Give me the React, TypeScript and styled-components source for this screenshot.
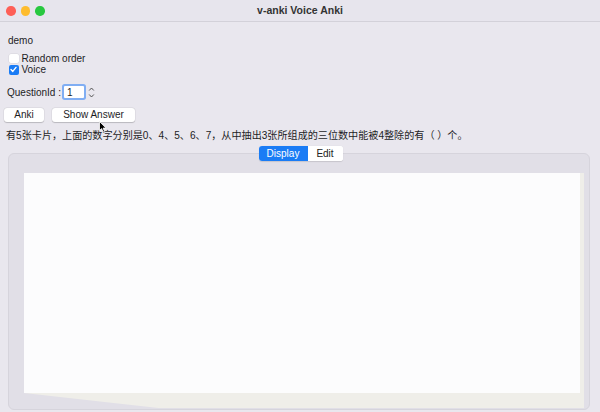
import React from "react";
import styled, { createGlobalStyle } from "styled-components";

const Global = createGlobalStyle`
  html, body { margin: 0; padding: 0; }
  body { font-family: "Liberation Sans", Arial, "Noto Sans CJK SC", sans-serif; }
`;

const Window = styled.div`
  position: relative;
  width: 600px;
  height: 412px;
  background: #e9e7ee;
  display: flex;
  flex-direction: column;
  overflow: hidden;
  color: #1d1d1f;
  font-size: 10px;
`;

const TitleBar = styled.div`
  height: 21px;
  flex: none;
  border-bottom: 1px solid #d3d1d9;
  background: #e7e5ed;
  display: flex;
  align-items: center;
  position: relative;
`;

const Lights = styled.div`
  display: flex;
  gap: 5px;
  padding-left: 6px;
  margin-top: 1px;
`;

const Light = styled.span<{ $c: string }>`
  width: 9.5px;
  height: 9.5px;
  border-radius: 50%;
  background: ${(p) => p.$c};
`;

const Title = styled.div`
  position: absolute;
  left: 0;
  right: 0;
  text-align: center;
  font-weight: bold;
  font-size: 10.5px;
  color: #333;
  top: 4px;
`;

const Body = styled.div`
  flex: 1;
  display: flex;
  flex-direction: column;
  padding: 0 7px;
`;

const Label = styled.div`
  margin-top: 12px;
  margin-left: 1px;
  line-height: 13px;
`;

const CheckList = styled.div`
  margin-top: 6px;
  display: flex;
  flex-direction: column;
`;

const CheckRow = styled.label`
  display: flex;
  align-items: center;
  height: 11.3px;
  gap: 3px;
  padding-left: 2px;
`;

const Box = styled.span<{ $on?: boolean }>`
  width: 9.5px;
  height: 9.5px;
  border-radius: 2px;
  box-sizing: border-box;
  background: ${(p) => (p.$on ? "#1a7cf5" : "#ffffff")};
  box-shadow: ${(p) => (p.$on ? "none" : "0 0 0 0.5px rgba(0,0,0,0.08)")};
  display: flex;
  align-items: center;
  justify-content: center;
`;

const QuestionRow = styled.div`
  margin-top: 8px;
  display: flex;
  align-items: center;
  height: 17px;
`;

const NumberField = styled.div`
  margin-left: 3px;
  width: 17px;
  height: 12px;
  background: #fff;
  box-shadow: 0 0 0 2px #80aef3;
  border-radius: 1px;
  display: flex;
  align-items: center;
  padding-left: 3px;
  font-size: 10px;
`;

const Stepper = styled.div`
  margin-left: 4px;
  width: 8px;
  height: 13px;
  display: flex;
  align-items: center;
  justify-content: center;
`;

const ButtonRow = styled.div`
  margin-top: 7px;
  margin-left: -3px;
  display: flex;
  gap: 8px;
`;

const Button = styled.div<{ $w: number }>`
  width: ${(p) => p.$w}px;
  height: 14px;
  background: #fff;
  border-radius: 3px;
  box-shadow: 0 0.5px 1px rgba(0, 0, 0, 0.18), 0 0 0 0.5px rgba(0, 0, 0, 0.06);
  display: flex;
  align-items: center;
  justify-content: center;
  font-size: 10px;
`;

const Question = styled.div`
  margin-top: 8px;
  margin-left: -1px;
  line-height: 12px;
  font-family: "Liberation Sans", "Noto Sans CJK SC", sans-serif;
  font-size: 10.1px;
  white-space: nowrap;
`;

const TabArea = styled.div`
  margin-top: 4px;
  display: flex;
  flex-direction: column;
  flex: 1;
`;

const Tabs = styled.div`
  align-self: center;
  display: flex;
  height: 15px;
  border-radius: 3px;
  overflow: hidden;
  background: #fff;
  box-shadow: 0 0.5px 1px rgba(0, 0, 0, 0.12);
  position: relative;
  z-index: 2;
  margin-left: 1px;
`;

const Tab = styled.div<{ $active?: boolean; $w: number }>`
  width: ${(p) => p.$w}px;
  display: flex;
  align-items: center;
  justify-content: center;
  font-size: 10px;
  background: ${(p) => (p.$active ? "#1a7cf5" : "#fff")};
  color: ${(p) => (p.$active ? "#fff" : "#222")};
`;

const Group = styled.div`
  margin: -8px 3px 2px 1px;
  flex: 1;
  background: #e1dfe7;
  border: 1px solid #d6d4dc;
  border-radius: 6px;
  padding: 19px 5px 1px 15px;
  display: flex;
  flex-direction: column;
`;

const Frame = styled.div`
  flex: 1;
  background: #efeee9;
  padding: 0 4px 15px 0;
  display: flex;
  clip-path: polygon(0 0, 100% 0, 100% 100%, 24% 100%, 0 calc(100% - 15px));
`;

const Sheet = styled.div`
  flex: 1;
  background: #fcfcfd;
`;

const Cursor = styled.svg`
  position: absolute;
  left: 99px;
  top: 121px;
`;

export default function App() {
  return (
    <>
      <Global />
      <Window>
        <TitleBar>
          <Lights>
            <Light $c="#fe5f57" />
            <Light $c="#febc2e" />
            <Light $c="#28c840" />
          </Lights>
          <Title>v-anki Voice Anki</Title>
        </TitleBar>
        <Body>
          <Label>demo</Label>
          <CheckList>
            <CheckRow>
              <Box />
              Random order
            </CheckRow>
            <CheckRow>
              <Box $on>
                <svg width="7" height="7" viewBox="0 0 7 7">
                  <path d="M1 3.6 L2.8 5.4 L6 1.4" fill="none" stroke="#fff" strokeWidth="1.4" strokeLinecap="round" strokeLinejoin="round" />
                </svg>
              </Box>
              Voice
            </CheckRow>
          </CheckList>
          <QuestionRow>
            QuestionId :
            <NumberField>1</NumberField>
            <Stepper>
              <svg width="7" height="13" viewBox="0 0 7 13">
                <path d="M1.2 4.5 L3.5 2 L5.8 4.5" fill="none" stroke="#444" strokeWidth="0.9" />
                <path d="M1.2 8.5 L3.5 11 L5.8 8.5" fill="none" stroke="#444" strokeWidth="0.9" />
              </svg>
            </Stepper>
          </QuestionRow>
          <ButtonRow>
            <Button $w={40}>Anki</Button>
            <Button $w={83}>Show Answer</Button>
          </ButtonRow>
          <Question>有5张卡片，上面的数字分别是0、4、5、6、7，从中抽出3张所组成的三位数中能被4整除的有（ ）个。</Question>
          <TabArea>
            <Tabs>
              <Tab $active $w={49}>Display</Tab>
              <Tab $w={35}>Edit</Tab>
            </Tabs>
            <Group>
              <Frame>
                <Sheet />
              </Frame>
            </Group>
          </TabArea>
        </Body>
        <Cursor width="9" height="12" viewBox="0 0 9 12">
          <path d="M0.5 0.5 L0.5 9.5 L2.6 7.6 L4.2 11 L5.6 10.4 L4.1 7.1 L7 7.1 Z" fill="#000" stroke="#fff" strokeWidth="0.8" />
        </Cursor>
      </Window>
    </>
  );
}
